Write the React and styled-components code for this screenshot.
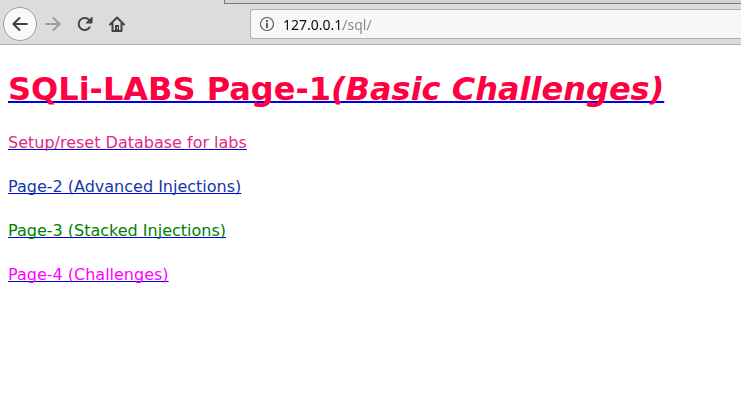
import React from "react";
import styled, { createGlobalStyle } from "styled-components";

const GlobalStyle = createGlobalStyle`
  body {
    margin: 0;
    background: #fff;
    font-family: "DejaVu Sans", sans-serif;
    font-size: 16px;
  }
`;

const Chrome = styled.header`
  background: #dcdcdc;
  border-bottom: 1px solid #b1b1b1;
`;

const TabStrip = styled.div`
  display: flex;
  height: 4px;
`;

const ActiveTab = styled.div`
  width: 224px;
`;

const TabRest = styled.div`
  flex: 1;
  box-sizing: border-box;
  background: #d4d4d4;
  border-left: 1px solid #79797b;
  border-bottom: 1px solid #79797b;
`;

const Toolbar = styled.nav`
  display: flex;
  align-items: center;
  height: 40px;
  padding-left: 3px;
`;

const ToolButton = styled.button`
  display: grid;
  place-items: center;
  flex: none;
  box-sizing: border-box;
  width: ${(p) => (p.$round ? 34 : 32)}px;
  height: ${(p) => (p.$round ? 34 : 32)}px;
  padding: 0;
  border: ${(p) => (p.$round ? "1px solid #a0a0a0" : "0")};
  border-radius: ${(p) => (p.$round ? "50%" : "2px")};
  background: ${(p) => (p.$round ? "#f9f9f9" : "transparent")};
  color: #434343;

  &:disabled {
    color: #9d9d9d;
  }
`;

const AddressBar = styled.label`
  display: flex;
  align-items: center;
  flex: 1;
  box-sizing: border-box;
  min-width: 0;
  height: 30px;
  margin-left: 117px;
  padding-left: 8px;
  gap: 8px;
  border: 1px solid #b1b1b1;
  border-right: 0;
  border-radius: 3px 0 0 3px;
  background: #f7f7f7;
  color: #5c5c5c;
`;

const AddressInput = styled.input`
  flex: 1;
  min-width: 0;
  height: 28px;
  padding: 0;
  border: 0;
  outline: 0;
  color: #0c0c0d;
  font-family: "Noto Sans", sans-serif;
  font-size: 14px;
  background: linear-gradient(to right, #0c0c0d 60px, #868686 60px);
  background-clip: text;
  -webkit-background-clip: text;
  -webkit-text-fill-color: transparent;
`;

const Page = styled.main`
  padding: 24px 8px;
`;

const PageLink = styled.a`
  color: #0000ee;
  text-decoration: underline;
  text-decoration-skip-ink: none;
`;

const Title = styled.h1`
  margin: 0 0 24px;
  font-size: 32px;
  line-height: 40px;

  ${PageLink} {
    text-decoration-thickness: 2px;
  }
`;

const LinkList = styled.div`
  display: flex;
  flex-direction: column;
  align-items: flex-start;
  gap: 24px;
  line-height: 20px;
`;

const Tint = styled.span`
  color: ${(p) => p.$color};
`;

const Icon = ({ children }) => (
  <svg width="16" height="16" viewBox="0 0 16 16" fill="none" stroke="currentColor"
    strokeWidth="2" strokeLinecap="round" strokeLinejoin="round" aria-hidden="true">
    {children}
  </svg>
);

const links = [
  { text: "Setup/reset Database for labs", color: "#de2b7f", href: "#setup" },
  { text: "Page-2 (Advanced Injections)", color: "#1238a5", href: "#page-2" },
  { text: "Page-3 (Stacked Injections)", color: "#008000", href: "#page-3" },
  { text: "Page-4 (Challenges)", color: "#ff00ff", href: "#page-4" },
];

export default function App() {
  return (
    <>
      <GlobalStyle />
      <Chrome>
        <TabStrip>
          <ActiveTab />
          <TabRest />
        </TabStrip>
        <Toolbar aria-label="Navigation">
          <ToolButton $round aria-label="Back">
            <Icon><path d="M15 8H1.5M7.5 2L1.4 8L7.5 14" /></Icon>
          </ToolButton>
          <ToolButton disabled aria-label="Forward">
            <Icon><path d="M1 8H14.5M8.5 2L14.6 8L8.5 14" /></Icon>
          </ToolButton>
          <ToolButton aria-label="Reload">
            <Icon>
              <path d="M12.6 11.4A6 6 0 1 1 12.4 4.3" />
              <path d="M15 1.5V7H9.5Z" fill="currentColor" strokeWidth="1" />
            </Icon>
          </ToolButton>
          <ToolButton aria-label="Home">
            <Icon>
              <path d="M1 8.5L8 1.5L15 8.5M3.5 7.5V15H12.5V7.5" />
              <path d="M6 15V9H10V15Z" fill="currentColor" stroke="none" />
              <path d="M8 11H9V13H8Z" fill="#dcdcdc" stroke="none" />
            </Icon>
          </ToolButton>
          <AddressBar>
            <svg width="16" height="16" viewBox="0 0 16 16" fill="none" stroke="currentColor" aria-hidden="true">
              <circle cx="8" cy="8" r="6.5" strokeWidth="1.2" />
              <path d="M8 7V12M8 4V6" strokeWidth="2" />
            </svg>
            <AddressInput aria-label="Address" defaultValue="127.0.0.1/sql/" spellCheck={false} />
          </AddressBar>
        </Toolbar>
      </Chrome>
      <Page>
        <Title>
          <PageLink href="#page-1">
            <Tint $color="#ff0040">SQLi-LABS Page-1<i>(Basic Challenges)</i></Tint>
          </PageLink>
        </Title>
        <LinkList>
          {links.map((link) => (
            <PageLink key={link.href} href={link.href}>
              <Tint $color={link.color}>{link.text}</Tint>
            </PageLink>
          ))}
        </LinkList>
      </Page>
    </>
  );
}
